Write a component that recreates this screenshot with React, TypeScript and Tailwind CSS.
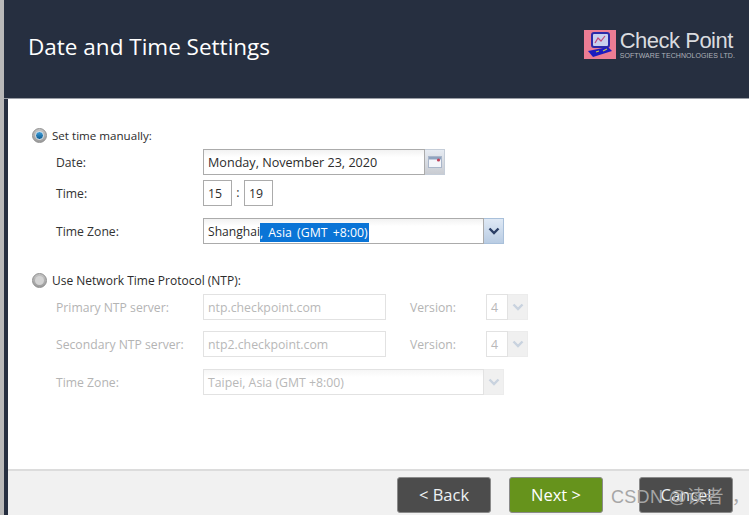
const font = "[font-family:'Open_Sans','Noto_Sans',sans-serif]";

function Chevron({ light }: { light?: boolean }) {
  return (
    <svg width="12" height="8" viewBox="0 0 12 8">
      <path d="M1.5 1.5 L6 6 L10.5 1.5" fill="none" stroke={light ? "#c9d3df" : "#2b3f66"} strokeWidth="2.4" />
    </svg>
  );
}

function Radio({ on }: { on?: boolean }) {
  return (
    <div className="w-[15px] h-[15px] rounded-full bg-gradient-to-b from-[#c4c4c4] to-[#9c9c9c] flex items-center justify-center shrink-0 border border-[#8e8e8e]">
      <div className={on ? "w-[9px] h-[9px] rounded-full bg-gradient-to-b from-[#3fa0dc] to-[#0a5a90] border border-[#d8e4ec]" : "w-[9px] h-[9px] rounded-full bg-[#d4d4d4]"} />
    </div>
  );
}

function Label({ children, disabled, w = "w-[147px]" }: { children: React.ReactNode; disabled?: boolean; w?: string }) {
  return <div className={`${w} shrink-0 pt-[2px] text-[12.2px] ${disabled ? "text-[#b4b4b4]" : "text-[#333333]"}`}>{children}</div>;
}

function Box({ w, children, disabled, className = "" }: { w: string; children?: React.ReactNode; disabled?: boolean; className?: string }) {
  return (
    <div className={`${w} h-[26px] shrink-0 flex items-center pl-[4px] pt-[2px] text-[12.3px] bg-white border ${disabled ? "border-[#e2e2e2] text-[#b8b8b8]" : "border-[#ababab] text-[#2c2c2c]"} ${className}`}>
      {children}
    </div>
  );
}

function DropBtn({ w, light }: { w: string; light?: boolean }) {
  return (
    <div className={`${w} h-[26px] shrink-0 flex items-center justify-center border ${light ? "bg-[#f0f0f0] border-[#ececec] border-l-0" : "bg-gradient-to-b from-[#dfe9f5] to-[#b9cce3] border-[#a9c0da] border-l-0"}`}>
      <Chevron light={light} />
    </div>
  );
}

function NtpRow({ label, value, className }: { label: string; value: string; className: string }) {
  return (
    <div className={`flex items-center pl-[48px] ${className}`}>
      <Label disabled>{label}</Label>
      <Box w="w-[183px]" disabled>{value}</Box>
      <div className="ml-[24px] w-[76px] pt-[2px] text-[12.2px] text-[#b4b4b4]">Version:</div>
      <Box w="w-[22px]" disabled>4</Box>
      <DropBtn w="w-[20px]" light />
    </div>
  );
}

function FooterBtn({ children, green }: { children: React.ReactNode; green?: boolean }) {
  return (
    <div className={`w-[94px] h-[36px] rounded-[3px] flex items-center justify-center text-[16.5px] border border-[#8a8a8a] ${green ? "bg-[#66931c] text-white" : "bg-[#4c4c4c] text-[#eef2f4]"}`}>
      {children}
    </div>
  );
}

export default function App() {
  return (
    <div className={`w-[749px] h-[515px] overflow-hidden flex relative bg-white ${font}`}>
      <div className="w-[4px] shrink-0 bg-[#b9b9b9]" />
      <div className="w-[4px] shrink-0 bg-[#262f40]" />
      <div className="flex-1 flex flex-col min-w-0">
        <div className="h-[99px] shrink-0 -ml-[4px] bg-[#262f40] flex items-center justify-between pr-[14px] pl-[24px] border-b border-[#9a9ea6]">
          <div className="text-[22.5px] text-white mt-[-5px]">Date and Time Settings</div>
          <div className="flex items-center mt-[-10px]">
            <svg width="32" height="29" viewBox="0 0 32 29">
              <rect width="32" height="29" fill="#ec7d94" />
              <rect x="8" y="3" width="17" height="14" rx="2" fill="#c8d0ee" stroke="#2a2aa8" strokeWidth="2" />
              <path d="M11 13 L14 8 L17 11 L21 6" fill="none" stroke="#c2477a" strokeWidth="1.2" />
              <path d="M4 21 L24 17 L28 21 L9 27 Z" fill="#1c1cc0" />
              <path d="M12 22 L15 21 M19 21 L23 19" stroke="#c8c850" strokeWidth="1.2" />
            </svg>
            <div className="ml-[4px] flex flex-col text-[#d9dbdf]">
              <div className="text-[22px] leading-[22px] tracking-[-0.5px] [font-family:'Liberation_Sans',sans-serif] whitespace-nowrap">Check Point</div>
              <div className="text-[7px] leading-[7px] tracking-[0.01em] text-[#aeb2ba] [font-family:'Liberation_Sans',sans-serif] whitespace-nowrap">SOFTWARE TECHNOLOGIES LTD.</div>
            </div>
          </div>
        </div>

        <div className="flex-1 min-h-0 flex flex-col">
          <div className="flex items-center gap-[5px] pl-[24px] mt-[28px] h-[16px]">
            <Radio on />
            <span className="text-[11.6px] pt-[2px] text-[#2c2c2c]">Set time manually:</span>
          </div>
          <div className="flex items-center pl-[48px] mt-[6px]">
            <Label>Date:</Label>
            <Box w="w-[222px]" className="bg-gradient-to-b from-[#f2f2f2] to-white to-30% text-[12.6px]">Monday, November 23, 2020</Box>
            <div className="w-[20px] h-[26px] bg-gradient-to-b from-[#e6ebf2] to-[#c9ccd2] border border-[#c5cdd8] border-l-0 flex items-center justify-center">
              <svg width="14" height="14" viewBox="0 0 14 14">
                <rect x="0.5" y="1.5" width="13" height="11" fill="#f4f6fa" stroke="#a9b6ca" />
                <rect x="1" y="2" width="12" height="2.5" fill="#8fa3bf" />
                <circle cx="10.5" cy="5" r="1.6" fill="#c2405a" />
              </svg>
            </div>
          </div>
          <div className="flex items-center pl-[48px] mt-[5px]">
            <Label>Time:</Label>
            <Box w="w-[29px]">15</Box>
            <span className="w-[12px] pt-[1px] text-center text-[12.5px] text-[#333333]">:</span>
            <Box w="w-[29px]">19</Box>
          </div>
          <div className="flex items-center pl-[48px] mt-[12px]">
            <Label>Time Zone:</Label>
            <Box w="w-[281px]" className="bg-gradient-to-b from-[#f2f2f2] to-white to-30%">
              <span className="text-[12.1px]">Shanghai</span>
              <span className="bg-[#0a74d6] text-white leading-[19px] pr-[1px] [word-spacing:2px]">, Asia (GMT +8:00)</span>
            </Box>
            <DropBtn w="w-[20px]" />
          </div>
          <div className="flex items-center gap-[5px] pl-[24px] mt-[28px] h-[16px]">
            <Radio />
            <span className="text-[12px] pt-[2px] text-[#2c2c2c]">Use Network Time Protocol (NTP):</span>
          </div>
          <NtpRow label="Primary NTP server:" value="ntp.checkpoint.com" className="mt-[6px]" />
          <NtpRow label="Secondary NTP server:" value="ntp2.checkpoint.com" className="mt-[11px]" />
          <div className="flex items-center pl-[48px] mt-[12px]">
            <Label disabled>Time Zone:</Label>
            <Box w="w-[281px]" disabled className="bg-gradient-to-b from-[#f6f6f6] to-white to-30%">Taipei, Asia (GMT +8:00)</Box>
            <DropBtn w="w-[20px]" light />
          </div>
        </div>

        <div className="h-[46px] shrink-0 bg-[#f1f1f1] border-t-2 border-[#dcdcdc] flex items-start pt-[6px] pl-[389px]">
          <FooterBtn>&lt; Back</FooterBtn>
          <div className="ml-[18px]"><FooterBtn green>Next &gt;</FooterBtn></div>
          <div className="ml-[36px]"><FooterBtn>Cancel</FooterBtn></div>
        </div>
      </div>
      <div className="absolute left-[611px] top-[484px] text-[18px] tracking-[0.3px] text-[#a6a6a6] whitespace-nowrap [font-family:'Liberation_Sans','Noto_Sans_CJK_SC',sans-serif]">CSDN @读者<span className="ml-[8px]">，</span></div>
    </div>
  );
}
